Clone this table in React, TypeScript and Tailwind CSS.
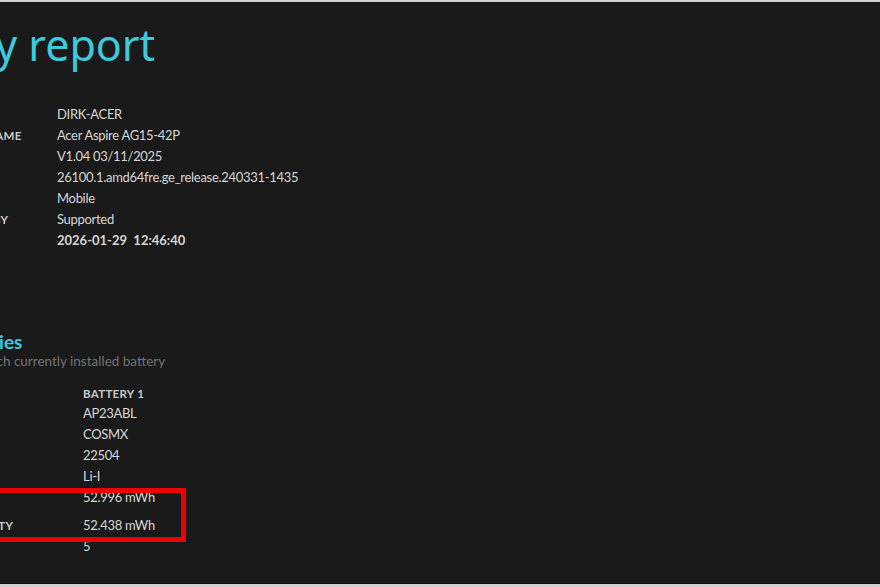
const font = { fontFamily: 'Lato, "Noto Sans", sans-serif' };
const titleFont = { fontFamily: '"Noto Sans", "Open Sans", sans-serif' };

const systemRows: [string, string, boolean?][] = [
  ['COMPUTER NAME', 'DIRK-ACER'],
  ['SYSTEM PRODUCT NAME', 'Acer Aspire AG15-42P'],
  ['BIOS', 'V1.04 03/11/2025'],
  ['OS BUILD', '26100.1.amd64fre.ge_release.240331-1435'],
  ['PLATFORM ROLE', 'Mobile'],
  ['CONNECTED STANDBY', 'Supported'],
  ['REPORT TIME', '2026-01-29  12:46:40', true],
];

const batteryRows: [string, string][] = [
  ['NAME', 'AP23ABL'],
  ['MANUFACTURER', 'COSMX'],
  ['SERIAL NUMBER', '22504'],
  ['CHEMISTRY', 'Li-I'],
  ['DESIGN CAPACITY', '52.996 mWh'],
];

function Label({
  children,
  className = '',
  lh = 'leading-[21px]',
}: {
  children: React.ReactNode;
  className?: string;
  lh?: string;
}) {
  return (
    <div className={`text-[11.5px] ${lh} font-bold uppercase tracking-[0.3px] text-[#c9c9c9] whitespace-nowrap ${className}`}>
      {children}
    </div>
  );
}

export default function App() {
  return (
    <div
      className="w-[880px] h-[587px] bg-[#1a1a1a] border-t-2 border-[#d2d2d2] overflow-hidden flex flex-col"
      style={font}
    >
      <div className="relative flex-1 overflow-hidden">
        <h1
          className="mt-[17px] -ml-[130px] text-[43px] leading-[52px] font-normal text-[#3ccbdc] whitespace-nowrap"
          style={titleFont}
        >
          Battery report
        </h1>

        <div className="mt-[33px] -ml-[123px] grid grid-cols-[180px_1fr] text-[13px] leading-[21px] tracking-[-0.3px] text-[#d6d6d6]">
          {systemRows.map(([k, v, bold]) => (
            <div key={k} className="contents">
              <Label>{k}</Label>
              <div className={bold ? 'font-bold tracking-normal whitespace-pre' : 'whitespace-pre'}>{v}</div>
            </div>
          ))}
        </div>

        <h2 className="mt-[81px] -ml-[128px] text-[19px] leading-[20px] font-bold text-[#3ccbdc] whitespace-nowrap">
          Installed batteries
        </h2>
        <p className="-ml-[128px] text-[13.5px] leading-[18px] text-[#737373] whitespace-nowrap">
          Information about each currently installed battery
        </p>

        <div className="mt-[14px] -ml-[127px] grid grid-cols-[210px_1fr] text-[13px] leading-[21px] tracking-[-0.3px] text-[#d6d6d6]">
          <div />
          <Label lh="leading-[19px]">Battery 1</Label>
          {batteryRows.map(([k, v]) => (
            <div key={k} className="contents">
              <Label>{k}</Label>
              <div>{v}</div>
            </div>
          ))}
          <Label className="mt-[7px]">Full charge capacity</Label>
          <div className="mt-[7px]">52.438 mWh</div>
          <Label>Cycle count</Label>
          <div>5</div>
        </div>

        <div className="absolute left-[-10px] top-[486px] w-[196px] h-[54px] border-[5px] border-[#ec0000]" />
      </div>
      <div className="h-px bg-[#0d0d0d]" />
      <div className="h-[3px] bg-[#cfcfcf]" />
    </div>
  );
}
